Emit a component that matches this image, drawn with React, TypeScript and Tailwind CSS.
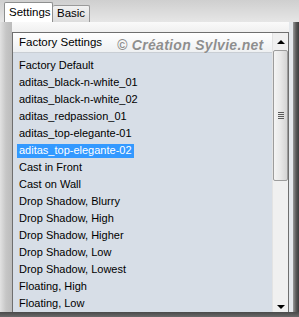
import { memo } from "react";

const presets = [
  "Factory Default",
  "aditas_black-n-white_01",
  "aditas_black-n-white_02",
  "aditas_redpassion_01",
  "aditas_top-elegante-01",
  "aditas_top-elegante-02",
  "Cast in Front",
  "Cast on Wall",
  "Drop Shadow, Blurry",
  "Drop Shadow, High",
  "Drop Shadow, Higher",
  "Drop Shadow, Low",
  "Drop Shadow, Lowest",
  "Floating, High",
  "Floating, Low",
];

const selected = "aditas_top-elegante-02";

const App = () => {
  return (
    <div className="w-[299px] h-[317px] flex flex-col overflow-hidden bg-[#d9d9d9] font-['Liberation_Sans',Arial,sans-serif] text-[11px] text-black">
      {/* tabs */}
      <div className="h-[22px] flex items-end pl-[4px] bg-gradient-to-b from-[#cfcfcf] to-[#e6e6e6] shrink-0">
        <div className="h-[20px] w-[49px] pl-[4px] flex items-center bg-white border border-b-0 border-[#8e8f8f] rounded-t-[2px] text-[11.5px]">
          Settings
        </div>
        <div className="h-[17px] w-[37px] pl-[4px] flex items-center bg-gradient-to-b from-[#f2f2f2] to-[#dcdcdc] border border-b-0 border-l-0 border-[#9a9a9a] rounded-t-[2px] text-[11.5px]">
          Basic
        </div>
      </div>

      <div className="flex-1 flex flex-col">
        <div className="flex-1 flex">
          <div className="w-[12px] bg-gradient-to-r from-[#e2e2e2] via-[#c6c6c6] to-[#bcbcbc]" />
          <div className="w-[277px] flex flex-col bg-[#f6f6f6]">
            <div className="h-[10px] bg-gradient-to-b from-[#fafafa] to-[#f0f0f0]" />
            {/* listbox */}
            <div className="flex-1 flex border border-[#6f6f6f] border-b-0 bg-[#d7dee7]">
              <div className="flex-1 flex flex-col">
                <div className="h-[20px] flex items-center pl-[6px] bg-gradient-to-b from-white to-[#eef0f2] border-b border-[#c9ced4] relative">
                  <span className="text-[11.5px]">Factory Settings</span>
                  <span className="absolute left-[104px] top-[2px] whitespace-nowrap text-[14px] italic font-bold text-[#8e8e8e] tracking-[0.3px] [text-shadow:0_0_1px_#ffffff]">
                    © Création Sylvie.net
                  </span>
                </div>
                <div className="pt-[4px] flex flex-col">
                  {presets.map((name) => (
                    <div key={name} className="h-[17px] flex items-center pl-[4px]">
                      <span
                        className={
                          name === selected
                            ? "px-[2px] h-[14px] flex items-center bg-[#3399ff] text-white text-[11px]"
                            : "px-[2px] text-[11px]"
                        }
                      >
                        {name}
                      </span>
                    </div>
                  ))}
                </div>
              </div>
              {/* scrollbar */}
              <div className="w-[16px] flex flex-col items-center bg-[#f0f0f0] border-l border-[#e3e3e3]">
                <div className="h-[17px] w-full flex items-center justify-center">
                  <div className="w-0 h-0 border-l-[4px] border-r-[4px] border-b-[4px] border-l-transparent border-r-transparent border-b-black" />
                </div>
                <div className="w-[15px] h-[131px] rounded-[2px] border border-[#9c9c9c] bg-gradient-to-r from-[#f4f4f4] via-[#e8e8e8] to-[#d4d4d4] flex items-center justify-center">
                  <div className="flex flex-col gap-[1px]">
                    <div className="w-[6px] h-[1px] bg-[#5a5a5a]" />
                    <div className="w-[6px] h-[1px] bg-[#5a5a5a]" />
                    <div className="w-[6px] h-[1px] bg-[#5a5a5a]" />
                    <div className="w-[6px] h-[1px] bg-[#5a5a5a]" />
                  </div>
                </div>
                <div className="flex-1" />
                <div className="h-[10px] w-full flex items-center justify-center">
                  <div className="w-0 h-0 border-l-[4px] border-r-[4px] border-t-[4px] border-l-transparent border-r-transparent border-t-black" />
                </div>
              </div>
            </div>
          </div>
          <div className="w-[10px] flex">
            <div className="w-[4px] bg-[#e4e8ec]" />
            <div className="flex-1 bg-gradient-to-r from-[#9a9a9a] via-[#5a5a5a] to-[#3c3c3c]" />
          </div>
        </div>
        <div className="h-[6px] bg-gradient-to-b from-[#4a4a4a] to-[#707070]" />
      </div>
    </div>
  );
};

export default memo(App);
